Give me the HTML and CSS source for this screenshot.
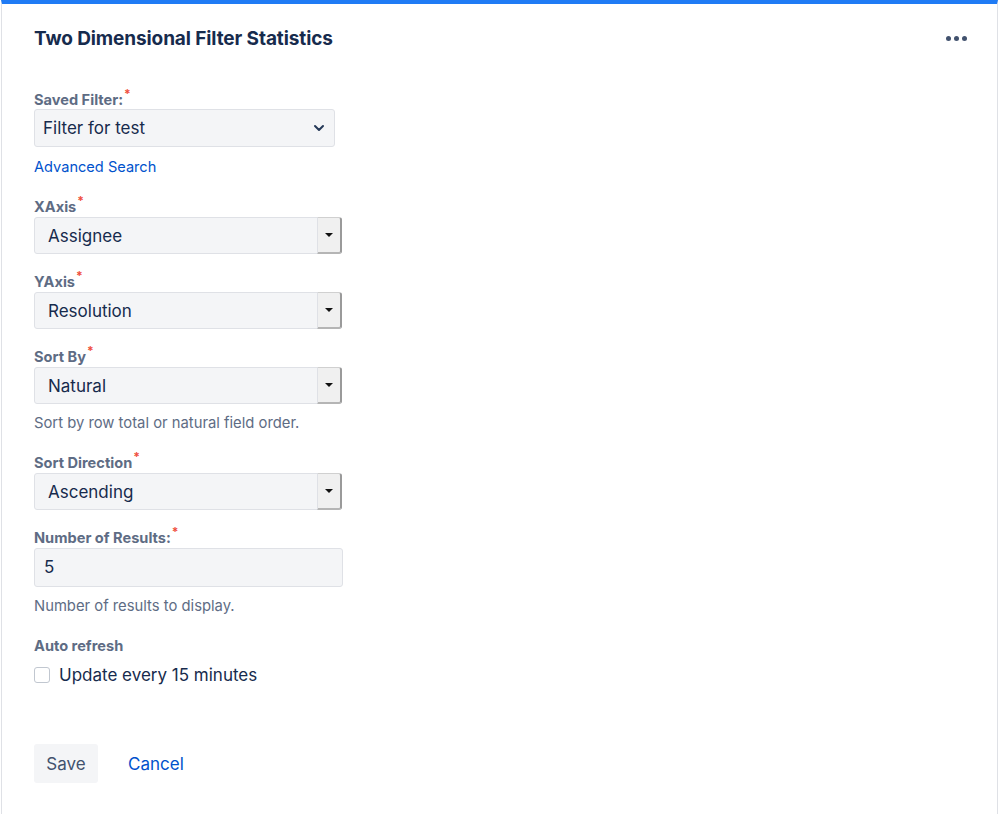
FILE: index.html
```html
<!DOCTYPE html>
<html lang="en">
<head>
    <meta charset="UTF-8">
    <title>Two Dimensional Filter Statistics</title>
    <link rel="stylesheet" href="styles.css">
</head>
<body>
    <div class="gadget">
        <div class="gadget-header">
            <h2>Two Dimensional Filter Statistics</h2>
            <span class="gadget-menu"><i></i><i></i><i></i></span>
        </div>

        <form class="gadget-form">
            <div class="field">
                <label>Saved Filter:<span class="req">*</span></label>
                <div class="select select-modern">
                    <span>Filter for test</span>
                    <svg width="12" height="8" viewBox="0 0 12 8"><path d="M2 2l4 4 4-4" fill="none" stroke="#253858" stroke-width="2" stroke-linecap="round" stroke-linejoin="round"/></svg>
                </div>
                <a class="link" href="#">Advanced Search</a>
            </div>

            <div class="field">
                <label>XAxis<span class="req">*</span></label>
                <div class="select select-legacy">
                    <span>Assignee</span>
                    <b class="drop"><i></i></b>
                </div>
            </div>

            <div class="field field-tight">
                <label>YAxis<span class="req">*</span></label>
                <div class="select select-legacy">
                    <span>Resolution</span>
                    <b class="drop"><i></i></b>
                </div>
            </div>

            <div class="field field-tight">
                <label>Sort By<span class="req">*</span></label>
                <div class="select select-legacy">
                    <span>Natural</span>
                    <b class="drop"><i></i></b>
                </div>
                <div class="help">Sort by row total or natural field order.</div>
            </div>

            <div class="field">
                <label>Sort Direction<span class="req">*</span></label>
                <div class="select select-legacy">
                    <span>Ascending</span>
                    <b class="drop"><i></i></b>
                </div>
            </div>

            <div class="field field-tight">
                <label>Number of Results:<span class="req">*</span></label>
                <div class="text-input">5</div>
                <div class="help">Number of results to display.</div>
            </div>

            <div class="field">
                <label>Auto refresh</label>
                <div class="check-row">
                    <span class="checkbox"></span>
                    <span>Update every 15 minutes</span>
                </div>
            </div>

            <div class="buttons">
                <button type="button" class="btn">Save</button>
                <a class="btn-link" href="#">Cancel</a>
            </div>
        </form>
    </div>
</body>
</html>
```

FILE: styles.css
```css
body {
    margin: 0;
    font-family: Inter, "Liberation Sans", sans-serif;
    color: #172b4d;
    background-color: white;
}

.gadget {
    box-sizing: border-box;
    width: 997px;
    height: 814px;
    border-top: 4px solid #1f7bf5;
    border-left: 1px solid #dfe1e6;
    border-right: 1px solid #dfe1e6;
    margin-left: 1px;
    padding-left: 32px;
}

.gadget-header {
    display: flex;
    align-items: center;
    justify-content: space-between;
    height: 24px;
    padding-top: 22px;
    padding-right: 30px;
}

.gadget-header h2 {
    margin: 0;
    font-size: 19px;
    font-weight: 700;
    color: #172b4d;
    letter-spacing: -0.1px;
}

.gadget-menu {
    display: flex;
    gap: 3px;
}

.gadget-menu i {
    width: 5px;
    height: 5px;
    border-radius: 50%;
    background-color: #42526e;
}

.gadget-form {
    padding-top: 40px;
}

.field {
    margin-top: 20px;
}

.field:first-child {
    margin-top: 0;
}

.field-tight {
    margin-top: 18px;
}

label {
    display: block;
    height: 20px;
    line-height: 20px;
    font-size: 14.6px;
    font-weight: 700;
    color: #5e6c84;
}

.req {
    color: #ef4e3c;
    font-size: 12px;
    position: relative;
    top: -7px;
    margin-left: 1px;
}

.select {
    display: flex;
    align-items: center;
    justify-content: space-between;
    box-sizing: border-box;
    background-color: #f4f5f7;
    border: 1px solid #dfe1e6;
    border-radius: 3px;
    font-size: 17px;
    color: #172b4d;
}

.select-modern {
    width: 301px;
    height: 38px;
    margin-top: -1px;
    padding: 0 9px 0 8px;
}

.select-legacy {
    width: 308px;
    height: 37px;
    padding-left: 13px;
}

.select-legacy .drop {
    align-self: stretch;
    width: 22px;
    margin: -1px -1px -1px 0;
    border-left: 1px solid #dfe1e6;
    border-right: 2px solid #9a9a9a;
    border-bottom: 2px solid #b5b5b5;
    border-top: 1px solid #d0d0d0;
    border-radius: 0 3px 3px 0;
    background-color: #f0f0f0;
    display: flex;
    align-items: center;
    justify-content: center;
}

.select-legacy .drop i {
    width: 0;
    height: 0;
    border-left: 4px solid transparent;
    border-right: 4px solid transparent;
    border-top: 4px solid #111;
}

.text-input {
    box-sizing: border-box;
    width: 309px;
    height: 39px;
    line-height: 37px;
    padding-left: 9px;
    background-color: #f4f5f7;
    border: 1px solid #dfe1e6;
    border-radius: 3px;
    font-size: 17px;
}

.link {
    display: block;
    margin-top: 10px;
    line-height: 20px;
    font-size: 14.6px;
    color: #0052cc;
    text-decoration: none;
}

.help {
    margin-top: 9px;
    line-height: 20px;
    font-size: 14.8px;
    color: #5e6c84;
}

.check-row {
    display: flex;
    align-items: center;
    gap: 9px;
    margin-top: 8px;
    height: 22px;
    font-size: 17px;
    color: #172b4d;
}

.checkbox {
    box-sizing: border-box;
    width: 16px;
    height: 16px;
    border: 1px solid #c1c7d0;
    border-radius: 3px;
    background-color: white;
}

.buttons {
    display: flex;
    align-items: center;
    gap: 30px;
    margin-top: 58px;
}

.btn {
    width: 64px;
    height: 39px;
    border: none;
    border-radius: 3px;
    background-color: #f4f5f7;
    color: #42526e;
    font-family: inherit;
    font-size: 17px;
}

.btn-link {
    font-size: 17px;
    color: #0052cc;
    text-decoration: none;
}
```
